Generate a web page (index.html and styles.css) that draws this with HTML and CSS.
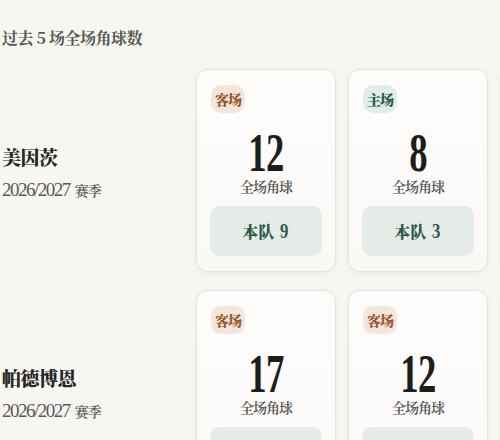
FILE: index.html
```html
<!DOCTYPE html>
<html lang="zh">
<head>
<meta charset="utf-8">
<title>过去 5 场全场角球数</title>
<link rel="stylesheet" href="styles.css">
</head>
<body>
<div class="page">
  <h2 class="title">过去 5 场全场角球数</h2>
  <div class="rows">
    <div class="row">
      <div class="team">
        <div class="team-name">美因茨</div>
        <div class="season"><span class="num">2026/2027</span><span class="season-word">赛季</span></div>
      </div>
      <div class="card">
        <span class="badge away">客场</span>
        <div class="total"><span class="digits">12</span></div>
        <div class="label">全场角球</div>
        <div class="own">本队 <span class="num">9</span></div>
      </div>
      <div class="card">
        <span class="badge home">主场</span>
        <div class="total"><span class="digits">8</span></div>
        <div class="label">全场角球</div>
        <div class="own">本队 <span class="num">3</span></div>
      </div>
      <div class="card card-edge"></div>
    </div>
    <div class="row">
      <div class="team">
        <div class="team-name">帕德博恩</div>
        <div class="season"><span class="num">2026/2027</span><span class="season-word">赛季</span></div>
      </div>
      <div class="card">
        <span class="badge away">客场</span>
        <div class="total"><span class="digits">17</span></div>
        <div class="label">全场角球</div>
        <div class="own">本队 <span class="num">7</span></div>
      </div>
      <div class="card">
        <span class="badge away">客场</span>
        <div class="total"><span class="digits">12</span></div>
        <div class="label">全场角球</div>
        <div class="own">本队 <span class="num">5</span></div>
      </div>
      <div class="card card-edge"></div>
    </div>
  </div>
</div>
</body>
</html>
```

FILE: styles.css
```css
html, body {
  margin: 0;
  padding: 0;
}
body {
  background: #f8f6f1;
  font-family: "Noto Serif CJK SC", "Noto Sans CJK SC", serif;
  color: #2b2b2b;
  overflow: hidden;
  width: 500px;
  height: 440px;
}
.page {
  padding: 26px 0 0 2px;
}
.title {
  margin: 0 0 19px 0;
  font-size: 16px;
  line-height: 24px;
  font-weight: 700;
  color: #565654;
  letter-spacing: -0.5px;
}
.rows {
  display: flex;
  flex-direction: column;
  gap: 18px;
}
.row {
  display: grid;
  grid-template-columns: 182px 140px 140px 140px;
  column-gap: 12px;
  align-items: center;
}
.num, .digits {
  font-family: "Liberation Serif", "Noto Serif CJK SC", serif;
}
.team {
  display: flex;
  flex-direction: column;
  gap: 11px;
  padding-top: 4px;
}
.team-name {
  font-size: 19px;
  line-height: 24px;
  font-weight: 900;
  color: #262626;
  letter-spacing: -0.5px;
}
.season {
  font-size: 14px;
  line-height: 20px;
  font-weight: 600;
  color: #5a5a58;
  letter-spacing: -1px;
}
.season .num {
  font-size: 19px;
  font-weight: 400;
  letter-spacing: -1.5px;
}
.season-word {
  margin-left: 5px;
}
.card {
  box-sizing: border-box;
  height: 203px;
  background: linear-gradient(180deg, #fefdfc 0%, #fbf9f6 100%);
  border: 1px solid #e7e3dc;
  border-radius: 12px;
  box-shadow: 0 1px 4px rgba(60, 50, 30, 0.07);
  padding: 15px 13px 14px 13px;
  display: flex;
  flex-direction: column;
  align-items: center;
}
.badge {
  align-self: flex-start;
  margin-left: 1px;
  font-size: 14px;
  line-height: 28px;
  height: 28px;
  padding: 0 4px;
  border-radius: 10px;
  font-weight: 900;
  letter-spacing: -1px;
}
.badge.away {
  background: #f4e6dc;
  color: #98562c;
}
.badge.home {
  background: #e0ede8;
  color: #245a47;
}
.total {
  margin-top: 12px;
  height: 46px;
  line-height: 46px;
  font-size: 54px;
  font-weight: 700;
  color: #1d1d1b;
}
.digits {
  display: inline-block;
  transform: scaleX(0.68);
  letter-spacing: -1px;
}
.label {
  margin-top: 7px;
  font-size: 14px;
  line-height: 17px;
  font-weight: 600;
  color: #4f4f4d;
  letter-spacing: -1px;
}
.own {
  box-sizing: border-box;
  margin-top: 11px;
  width: 100%;
  height: 50px;
  border-radius: 10px;
  background: #e5ebe6;
  color: #2c5a4a;
  font-size: 16px;
  font-weight: 900;
  display: flex;
  align-items: center;
  justify-content: center;
  gap: 5px;
}
.own .num {
  font-size: 21px;
  font-weight: 700;
  display: inline-block;
  transform: scaleX(0.8);
}
```
